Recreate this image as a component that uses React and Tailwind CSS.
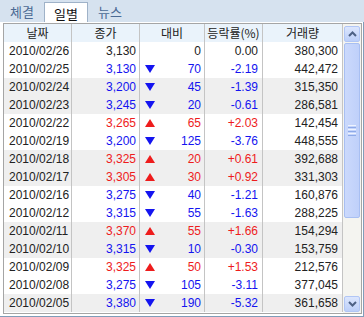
import React from "react";

const rows = [
  ["2010/02/26", "3,130", "0", "0.00", "380,300", 0],
  ["2010/02/25", "3,130", "70", "-2.19", "442,472", -1],
  ["2010/02/24", "3,200", "45", "-1.39", "315,350", -1],
  ["2010/02/23", "3,245", "20", "-0.61", "286,581", -1],
  ["2010/02/22", "3,265", "65", "+2.03", "142,454", 1],
  ["2010/02/19", "3,200", "125", "-3.76", "448,555", -1],
  ["2010/02/18", "3,325", "20", "+0.61", "392,688", 1],
  ["2010/02/17", "3,305", "30", "+0.92", "331,303", 1],
  ["2010/02/16", "3,275", "40", "-1.21", "160,876", -1],
  ["2010/02/12", "3,315", "55", "-1.63", "288,225", -1],
  ["2010/02/11", "3,370", "55", "+1.66", "154,294", 1],
  ["2010/02/10", "3,315", "10", "-0.30", "153,759", -1],
  ["2010/02/09", "3,325", "50", "+1.53", "212,576", 1],
  ["2010/02/08", "3,275", "105", "-3.11", "377,045", -1],
  ["2010/02/05", "3,380", "190", "-5.32", "361,658", -1],
];

const stripe = [false, false, true, true, false, false, true, true, false, false, true, true, false, false, true];

function Tri({ dir }) {
  if (dir === 0) return null;
  if (dir > 0)
    return (
      <svg width="10" height="8" viewBox="0 0 10 8" className="block">
        <polygon points="5,0 10,8 0,8" fill="#ee1c1c" />
      </svg>
    );
  return (
    <svg width="10" height="8" viewBox="0 0 10 8" className="block">
      <polygon points="0,0 10,0 5,8" fill="#1414f0" />
    </svg>
  );
}

function Chevron({ up }) {
  return (
    <svg width="9" height="6" viewBox="0 0 9 6" className="block">
      <polyline
        points={up ? "1,5 4.5,1.5 8,5" : "1,1 4.5,4.5 8,1"}
        fill="none"
        stroke="#4d6185"
        strokeWidth="2"
      />
    </svg>
  );
}

export default function App() {
  const font = { fontFamily: '"Liberation Sans", "Noto Sans CJK KR", sans-serif' };
  return (
    <div className="w-[364px] h-[317px] bg-white overflow-hidden text-[12px]" style={font}>
      {/* tab bar */}
      <div className="h-[22px] bg-[#d6e2ef] flex items-end text-[13px]" style={{ fontFamily: '"Noto Sans CJK KR", sans-serif' }}>
        <div className="w-[44px] h-[22px] flex items-center justify-center text-[#4b6a94] leading-none">체결</div>
        <div className="w-[44px] h-[20px] bg-white border-l border-t border-r border-[#9fb2c8] flex items-center justify-center text-[#111] leading-none pt-[1px]">일별</div>
        <div className="w-[44px] h-[22px] flex items-center justify-center text-[#4b6a94] leading-none">뉴스</div>
      </div>
      {/* panel */}
      <div className="h-[295px] border-r border-b border-[#7f9db9] pt-[1px] pl-[3px] pr-[1px]">
        <div className="h-[291px] border border-[#a5a5a5] flex">
          <div className="w-[341px] flex flex-col">
            {/* header */}
            <div className="h-[18px] flex bg-[#eaf3fb] text-[#222] leading-none" style={{ fontFamily: '"Noto Sans CJK KR", sans-serif' }}>
              <div className="w-[68px] border-r border-[#c4c4c4] flex items-center justify-center">날짜</div>
              <div className="w-[68px] border-r border-[#c4c4c4] flex items-center justify-center">종가</div>
              <div className="w-[65px] border-r border-[#c4c4c4] flex items-center justify-center">대비</div>
              <div className="w-[58px] border-r border-[#c4c4c4] flex items-center justify-center">등락률(%)</div>
              <div className="w-[80px] border-r border-[#c4c4c4] flex items-center justify-center">거래량</div>
            </div>
            {rows.map((r, i) => {
              const color = r[5] > 0 ? "text-[#ee1c1c]" : r[5] < 0 ? "text-[#1414f0]" : "text-[#222]";
              return (
                <div key={r[0]} className={`h-[18px] flex leading-none ${stripe[i] ? "bg-[#efefef]" : "bg-white"}`}>
                  <div className="w-[68px] border-r border-[#c4c4c4] flex items-center pl-[5px] text-[#222]">{r[0]}</div>
                  <div className={`w-[68px] border-r border-[#c4c4c4] flex items-center justify-end pr-[3px] ${color}`}>{r[1]}</div>
                  <div className={`w-[65px] border-r border-[#c4c4c4] flex items-center justify-between pl-[5px] pr-[3px] ${color}`}>
                    <Tri dir={r[5]} />
                    <span className="ml-auto">{r[2]}</span>
                  </div>
                  <div className={`w-[58px] border-r border-[#c4c4c4] flex items-center justify-end pr-[4px] ${color}`}>{r[3]}</div>
                  <div className="w-[80px] border-r border-[#c4c4c4] flex items-center justify-end pr-[4px] text-[#222]">{r[4]}</div>
                </div>
              );
            })}
          </div>
          {/* scrollbar */}
          <div className="w-[18px] bg-[#f4f4f0] flex flex-col px-[1px] pt-[2px] pb-[1px]">
            <div className="h-[16px] rounded-[2px] border border-[#b1c6f5] bg-gradient-to-b from-[#dce6fd] to-[#bccff9] flex items-center justify-center">
              <Chevron up />
            </div>
            <div className="h-[175px] mt-[1px] rounded-[2px] border border-[#a8bff2] bg-gradient-to-r from-[#cbd9fc] to-[#bfd0fa] flex flex-col items-center justify-center gap-[1px]">
              <div className="w-[8px] h-[1px] bg-[#eef3fe]" />
              <div className="w-[8px] h-[1px] bg-[#8eaae8]" />
              <div className="w-[8px] h-[1px] bg-[#eef3fe]" />
              <div className="w-[8px] h-[1px] bg-[#8eaae8]" />
              <div className="w-[8px] h-[1px] bg-[#eef3fe]" />
              <div className="w-[8px] h-[1px] bg-[#8eaae8]" />
            </div>
            <div className="flex-1" />
            <div className="h-[16px] rounded-[2px] border border-[#b1c6f5] bg-gradient-to-b from-[#dce6fd] to-[#bccff9] flex items-center justify-center">
              <Chevron />
            </div>
          </div>
        </div>
      </div>
    </div>
  );
}
